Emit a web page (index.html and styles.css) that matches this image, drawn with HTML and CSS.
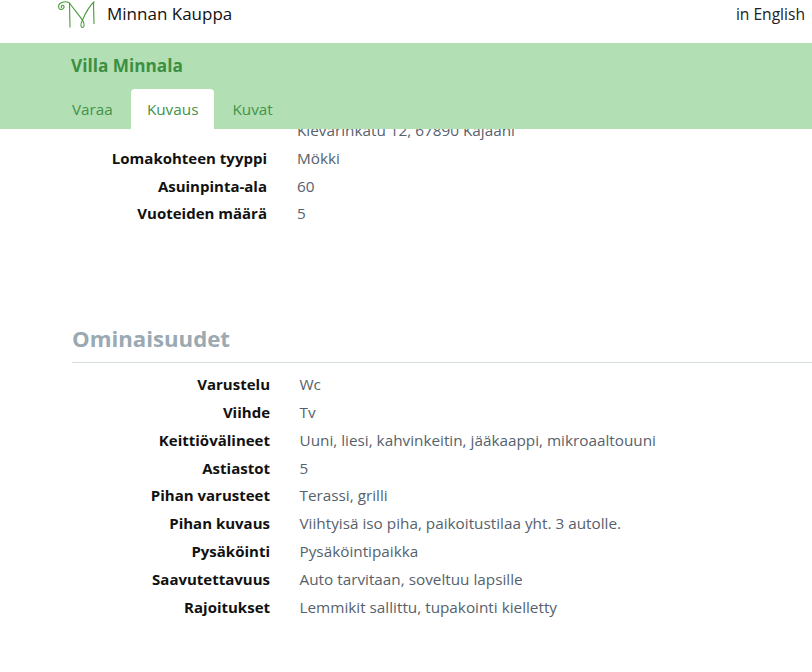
FILE: index.html
```html
<!DOCTYPE html>
<html lang="fi">
<head>
<meta charset="utf-8">
<title>Villa Minnala</title>
<link rel="stylesheet" href="styles.css">
</head>
<body>
<header class="top">
  <div class="brandbar">
    <a class="brand">
      <svg class="logo" width="42" height="30" viewBox="0 0 42 30" fill="none" stroke="#4a9a3a" stroke-width="1.1">
        <path d="M7 8C5.5 7 6.5 4.5 8.5 5.5C10 7 8 10 5.5 9.5C3 8.5 3 5 5 3.5C8 1.5 12 1.5 14.5 3L15 27.5"/>
        <path d="M14.5 3C18 8 24 15 28 21C30 25 29 27.5 27.5 27.5C26 27.5 25 25 27 21C30 14 34 6 39.5 1.5"/>
        <path d="M38.5 2.5L39 24"/>
      </svg>
      <span class="brandname">Minnan Kauppa</span>
    </a>
    <a class="lang">in English</a>
  </div>
  <div class="greenbar">
    <h1 class="title">Villa Minnala</h1>
    <nav class="tabs">
      <a class="tab">Varaa</a>
      <a class="tab tab-active">Kuvaus</a>
      <a class="tab">Kuvat</a>
    </nav>
  </div>
</header>
<main class="content">
  <dl class="props props-first">
    <dt></dt><dd>Kievarinkatu 12, 67890 Kajaani</dd>
    <dt>Lomakohteen tyyppi</dt><dd>Mökki</dd>
    <dt>Asuinpinta-ala</dt><dd>60</dd>
    <dt>Vuoteiden määrä</dt><dd>5</dd>
  </dl>
  <h2 class="section">Ominaisuudet</h2>
  <dl class="props props-second">
    <dt>Varustelu</dt><dd>Wc</dd>
    <dt>Viihde</dt><dd>Tv</dd>
    <dt>Keittiövälineet</dt><dd>Uuni, liesi, kahvinkeitin, jääkaappi, mikroaaltouuni</dd>
    <dt>Astiastot</dt><dd>5</dd>
    <dt>Pihan varusteet</dt><dd>Terassi, grilli</dd>
    <dt>Pihan kuvaus</dt><dd>Viihtyisä iso piha, paikoitustilaa yht. 3 autolle.</dd>
    <dt>Pysäköinti</dt><dd>Pysäköintipaikka</dd>
    <dt>Saavutettavuus</dt><dd>Auto tarvitaan, soveltuu lapsille</dd>
    <dt>Rajoitukset</dt><dd>Lemmikit sallittu, tupakointi kielletty</dd>
  </dl>
</main>
</body>
</html>
```
FILE: styles.css
```css
* { box-sizing: border-box; }
html, body { margin: 0; height: 100%; overflow: hidden; background: #fff; }
body { font-family: "Open Sans", "Noto Sans", sans-serif; font-size: 15.3px; color: #56616c; }
.top { position: absolute; top: 0; left: 0; right: 0; z-index: 2; background: #fff; }
.brandbar { height: 43px; display: flex; justify-content: space-between; padding: 0 7px 0 55px; }
.brand { display: flex; align-items: flex-start; }
.logo { display: block; }
.brandname { margin: 2px 0 0 10px; font-size: 17px; line-height: 24px; color: #111; }
.lang { margin-top: 2px; font-size: 15.6px; line-height: 24px; color: #222; }
.greenbar { height: 86px; background: #b2dfb4; padding: 0 0 0 56px; display: flex; flex-direction: column; justify-content: space-between; }
.title { margin: 11px 0 0 15px; font-size: 17.2px; line-height: 24px; font-weight: 700; color: #3d8f42; }
.tabs { display: flex; gap: 2px; }
.tab { padding: 0 16px; height: 40px; line-height: 40px; font-size: 15.3px; color: #42934a; border-radius: 4px 4px 0 0; }
.tab-active { background: #fff; }
.content { padding: 117px 0 0 72px; }
.props { display: grid; margin: 0; }
.props dt { font-size: 15px; font-weight: 700; color: #111; text-align: right; line-height: 27.8px; }
.props dd { margin: 0; line-height: 27.8px; }
.props-first { grid-template-columns: 195px 1fr; column-gap: 30px; }
.props-second { grid-template-columns: 198px 1fr; column-gap: 29.5px; padding-top: 8px; }
.section { margin: 94px 0 0; padding-bottom: 6px; font-size: 22.2px; line-height: 34px; font-weight: 700; color: #9aa9b2; border-bottom: 1px solid #d5dde0; }
```
